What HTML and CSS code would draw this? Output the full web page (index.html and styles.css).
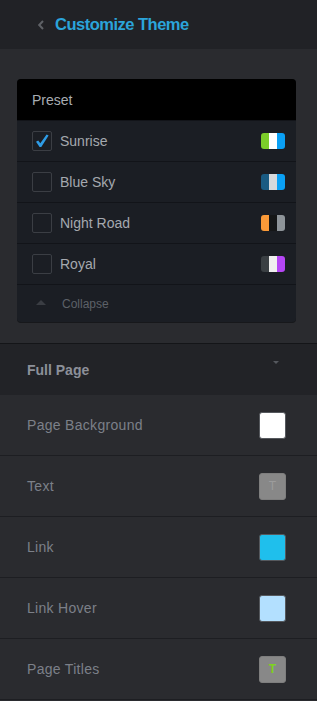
FILE: index.html
```html
<!DOCTYPE html>
<html>
<head>
<meta charset="utf-8">
<link rel="stylesheet" href="styles.css">
</head>
<body>
<div class="app">
  <header class="topbar">
    <svg class="back" width="8" height="12" viewBox="0 0 8 12"><path d="M6 2 L2.2 6 L6 10" fill="none" stroke="#5f6267" stroke-width="2"/></svg>
    <h1 class="title">Customize Theme</h1>
  </header>
  <div class="preset-wrap">
    <div class="card">
      <div class="card-head">Preset</div>
      <div class="preset-row">
        <span class="check checked"><svg width="18" height="18" viewBox="0 0 18 18"><path d="M3 9.8 L5.2 8.4 L7.3 11.2 L13.6 2.6 L15.6 3.6 L8.3 15 L6.6 15 Z" fill="#2e9ce6"/></svg></span>
        <span class="preset-name">Sunrise</span>
        <span class="chips"><i style="background:#7ccd2a"></i><i style="background:#ffffff"></i><i style="background:#0aa0f5"></i></span>
      </div>
      <div class="preset-row">
        <span class="check"></span>
        <span class="preset-name">Blue Sky</span>
        <span class="chips"><i style="background:#1a5b82"></i><i style="background:#d6d9dc"></i><i style="background:#0aa0f5"></i></span>
      </div>
      <div class="preset-row">
        <span class="check"></span>
        <span class="preset-name">Night Road</span>
        <span class="chips"><i style="background:#fb9a38"></i><i style="background:#151617"></i><i style="background:#8e9499"></i></span>
      </div>
      <div class="preset-row">
        <span class="check"></span>
        <span class="preset-name">Royal</span>
        <span class="chips"><i style="background:#3a3f43"></i><i style="background:#efefef"></i><i style="background:#b546f5"></i></span>
      </div>
      <div class="collapse-row">
        <span class="tri-up"></span>
        <span class="collapse-label">Collapse</span>
      </div>
    </div>
  </div>
  <section class="group">
    <div class="group-head">
      <span class="group-title">Full Page</span>
      <span class="tri-down"></span>
    </div>
    <div class="opt-row"><span class="opt-label">Page Background</span><span class="swatch" style="background:#ffffff"></span></div>
    <div class="opt-row"><span class="opt-label">Text</span><span class="swatch tbox"><span class="tglyph grey">T</span></span></div>
    <div class="opt-row"><span class="opt-label">Link</span><span class="swatch" style="background:#1fbfec"></span></div>
    <div class="opt-row"><span class="opt-label">Link Hover</span><span class="swatch" style="background:#b3e0ff"></span></div>
    <div class="opt-row"><span class="opt-label">Page Titles</span><span class="swatch tbox"><span class="tglyph green">T</span></span></div>
  </section>
</div>
</body>
</html>
```

FILE: styles.css
```css
* { box-sizing: border-box; }
html, body { margin: 0; padding: 0; }
body {
  background: #2a2b2f;
  font-family: "Liberation Sans", Arial, sans-serif;
  width: 317px;
  height: 701px;
  overflow: hidden;
}
.app { width: 317px; }
.topbar {
  height: 49px;
  background: #212226;
  display: flex;
  align-items: center;
  padding-left: 37px;
}
.back { margin-right: 10px; margin-top: 0; }
.title {
  margin: 0;
  font-size: 16.5px;
  font-weight: bold;
  color: #2ba4da;
  letter-spacing: -0.5px;
}
.preset-wrap {
  padding: 30px 21px 21px 17px;
}
.card {
  background: #1b1e24;
  border-radius: 4px;
  overflow: hidden;
  box-shadow: 0 1px 0 #17181b;
}
.card-head {
  height: 41px;
  background: #000;
  color: #a8acb2;
  font-size: 14px;
  display: flex;
  align-items: center;
  padding-left: 15px;
}
.preset-row {
  height: 41px;
  display: flex;
  align-items: center;
  padding: 0 11px 0 15px;
  border-top: 1px solid #121419;
}
.check {
  width: 20px;
  height: 20px;
  border: 1px solid #3b3e44;
  border-radius: 2px;
  display: flex;
  align-items: center;
  justify-content: center;
  flex: none;
}
.preset-name {
  margin-left: 8px;
  font-size: 14px;
  color: #a5a9af;
  flex: 1;
}
.chips {
  display: flex;
  width: 24px;
  height: 16px;
  border-radius: 3px;
  overflow: hidden;
}
.chips i { flex: 1; display: block; }
.collapse-row {
  height: 38px;
  display: flex;
  align-items: center;
  padding-left: 19px;
  border-top: 1px solid #121419;
}
.tri-up {
  width: 0; height: 0;
  border-left: 5px solid transparent;
  border-right: 5px solid transparent;
  border-bottom: 5px solid #3a3d43;
  margin-top: -2px;
}
.collapse-label {
  margin-left: 16px;
  font-size: 12px;
  color: #5d6168;
}
.group { border-top: 1px solid #141518; }
.group-head {
  height: 51px;
  background: #222327;
  display: flex;
  align-items: center;
  justify-content: space-between;
  padding: 0 38px 0 27px;
}
.group-title {
  font-size: 14px;
  font-weight: bold;
  color: #8c9099;
}
.tri-down {
  width: 0; height: 0;
  border-left: 3px solid transparent;
  border-right: 3px solid transparent;
  border-top: 3px solid #55585e;
  margin-top: -14px;
}
.opt-row {
  height: 61px;
  display: flex;
  align-items: center;
  justify-content: space-between;
  padding: 0 31px 0 27px;
  border-bottom: 1px solid #1d1e22;
}
.opt-label {
  font-size: 14px;
  letter-spacing: 0.3px;
  color: #7c8089;
}
.swatch {
  width: 27px;
  height: 27px;
  border-radius: 3px;
  border: 1px solid #55585d;
  display: flex;
  align-items: center;
  justify-content: center;
}
.tbox { background: #888888; border-color: #7e7e7e; }
.tglyph { font-size: 12px; line-height: 1; }
.tglyph.grey { color: #9c9c9c; }
.tglyph.green { color: #7ed321; font-weight: bold; }
```
